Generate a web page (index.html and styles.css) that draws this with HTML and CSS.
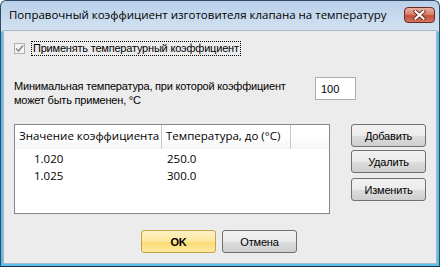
FILE: index.html
```html
<!DOCTYPE html>
<html lang="ru">
<head>
  <meta charset="UTF-8">
  <title>Поправочный коэффициент</title>
  <link rel="stylesheet" href="styles.css">
</head>
<body>

<div class="window">
  <div class="titlebar">
    <span class="title">Поправочный коэффициент изготовителя клапана на температуру</span>
    <button class="close-btn" aria-label="Закрыть">
      <svg width="13" height="10" viewBox="0 0 13 10">
        <path d="M2.5 1.5 L10.5 8.5 M10.5 1.5 L2.5 8.5" stroke="#5a2418" stroke-width="3.8" stroke-linecap="square"/>
        <path d="M2.5 1.5 L10.5 8.5 M10.5 1.5 L2.5 8.5" stroke="#fff" stroke-width="2.2" stroke-linecap="square"/>
      </svg>
    </button>
  </div>

  <div class="client">
    <label class="check-row">
      <span class="check-box">
        <svg width="9" height="9" viewBox="0 0 9 9">
          <path d="M1 4.5 L3.5 7 L8 1.5" fill="none" stroke="#8a8a8a" stroke-width="1.6"/>
        </svg>
      </span>
      <span class="focus-label">Применять температурный коэффициент</span>
    </label>

    <div class="min-row">
      <p class="min-text">Минимальная температура, при которой коэффициент<br>может быть применен, °C</p>
      <input class="min-input" type="text" value="100">
    </div>

    <div class="list-row">
      <div class="list">
        <div class="list-head">
          <div class="col col-1">Значение коэффициента</div>
          <div class="col col-2">Температура, до (°C)</div>
        </div>
        <div class="list-item"><span class="cell-1">1.020</span><span class="cell-2">250.0</span></div>
        <div class="list-item"><span class="cell-1">1.025</span><span class="cell-2">300.0</span></div>
      </div>
      <div class="side-buttons">
        <button class="btn">Добавить</button>
        <button class="btn">Удалить</button>
        <button class="btn btn-gap">Изменить</button>
      </div>
    </div>

    <div class="footer">
      <button class="btn btn-ok">OK</button>
      <button class="btn">Отмена</button>
    </div>
  </div>
</div>

</body>
</html>
```

FILE: styles.css
```css
body {
  margin: 0;
  background: #fff;
  font-family: 'Liberation Sans', Arial, sans-serif;
  font-size: 11px;
  letter-spacing: -0.2px;
  color: #000;
}

.window {
  width: 440px;
  height: 267px;
  box-sizing: border-box;
  border: 1px solid #2f4a66;
  border-bottom-color: #1c2c3c;
  border-radius: 6px 6px 0 0;
  background: linear-gradient(#b9d0e9, #d3e2f2 30px, #5cc0ec 31px);
  display: flex;
  flex-direction: column;
  padding: 0 2px 2px 2px;
}

.titlebar {
  height: 29px;
  display: flex;
  align-items: flex-start;
  justify-content: space-between;
  flex-shrink: 0;
}

.title {
  font-family: 'Open Sans', 'Noto Sans', sans-serif;
  font-size: 11.5px;
  letter-spacing: 0;
  margin: 6px 0 0 6px;
  color: #000;
}

.close-btn {
  width: 31px;
  height: 16px;
  margin: 6px 2px 0 0;
  padding: 0;
  border: 1px solid #6a2a22;
  border-radius: 4px;
  background: linear-gradient(#eab0a2, #d8806c 45%, #c4503a 55%, #d27560);
  display: flex;
  align-items: center;
  justify-content: center;
}

.client {
  flex: 1;
  background: #ececec;
  border: 1px solid #a8b8c8;
  padding: 10px 0 0 10px;
  display: flex;
  flex-direction: column;
}

.check-row {
  display: flex;
  align-items: center;
  gap: 6px;
  height: 15px;
}

.check-box {
  width: 11px;
  height: 11px;
  box-sizing: border-box;
  border: 1px solid #b1b1b1;
  background: #f4f4f4;
  display: flex;
  align-items: center;
  justify-content: center;
}

.focus-label {
  border: 1px dotted #000;
  padding: 0 1px;
  line-height: 13px;
}

.min-row {
  display: flex;
  align-items: flex-start;
  margin-top: 21px;
}

.min-text {
  margin: 2px 0 0 0;
  width: 301px;
  line-height: 14px;
}

.min-input {
  width: 41px;
  height: 23px;
  box-sizing: border-box;
  border: 1px solid #abadb3;
  background: #fff;
  font: inherit;
  padding: 0 5px;
  margin: 0;
}

.list-row {
  display: flex;
  align-items: flex-start;
  margin-top: 17px;
}

.list {
  width: 316px;
  height: 90px;
  box-sizing: border-box;
  border: 1px solid #828790;
  background: #fff;
  font-family: 'Open Sans', 'Noto Sans', sans-serif;
  font-size: 11.5px;
  letter-spacing: 0;
}

.list-head {
  display: flex;
  height: 24px;
  white-space: nowrap;
  background: linear-gradient(#fff, #fff 50%, #f4f5f7);
}

.col {
  flex: none;
  overflow: hidden;
  box-sizing: border-box;
  padding: 3px 0 0 4px;
  border-right: 1px solid #c8c8c8;
}

.col-1 {
  width: 147px;
}

.col-2 {
  width: 129px;
}

.list-item {
  display: flex;
  height: 17px;
  line-height: 17px;
}

.list-head + .list-item {
  margin-top: 1px;
}

.cell-1 {
  width: 133px;
  padding-left: 19px;
}

.side-buttons {
  display: flex;
  flex-direction: column;
  gap: 3px;
  margin-left: 21px;
}

.btn {
  width: 75px;
  height: 23px;
  box-sizing: border-box;
  border: 1px solid #707070;
  border-radius: 3px;
  background: linear-gradient(#f2f2f2, #ebebeb 50%, #dddddd 51%, #cfcfcf);
  font-family: 'Liberation Sans', Arial, sans-serif;
  font-size: 11px;
  letter-spacing: -0.2px;
  color: #000;
  padding: 0;
}

.btn-gap {
  margin-top: 2px;
}

.footer {
  display: flex;
  gap: 6px;
  margin-top: 16px;
  padding-left: 127px;
}

.btn-ok {
  border-color: #c7a04e;
  background: linear-gradient(#fdf2c4, #fce79d 50%, #fbd96e 51%, #fde9a3);
  font-weight: bold;
}
```
